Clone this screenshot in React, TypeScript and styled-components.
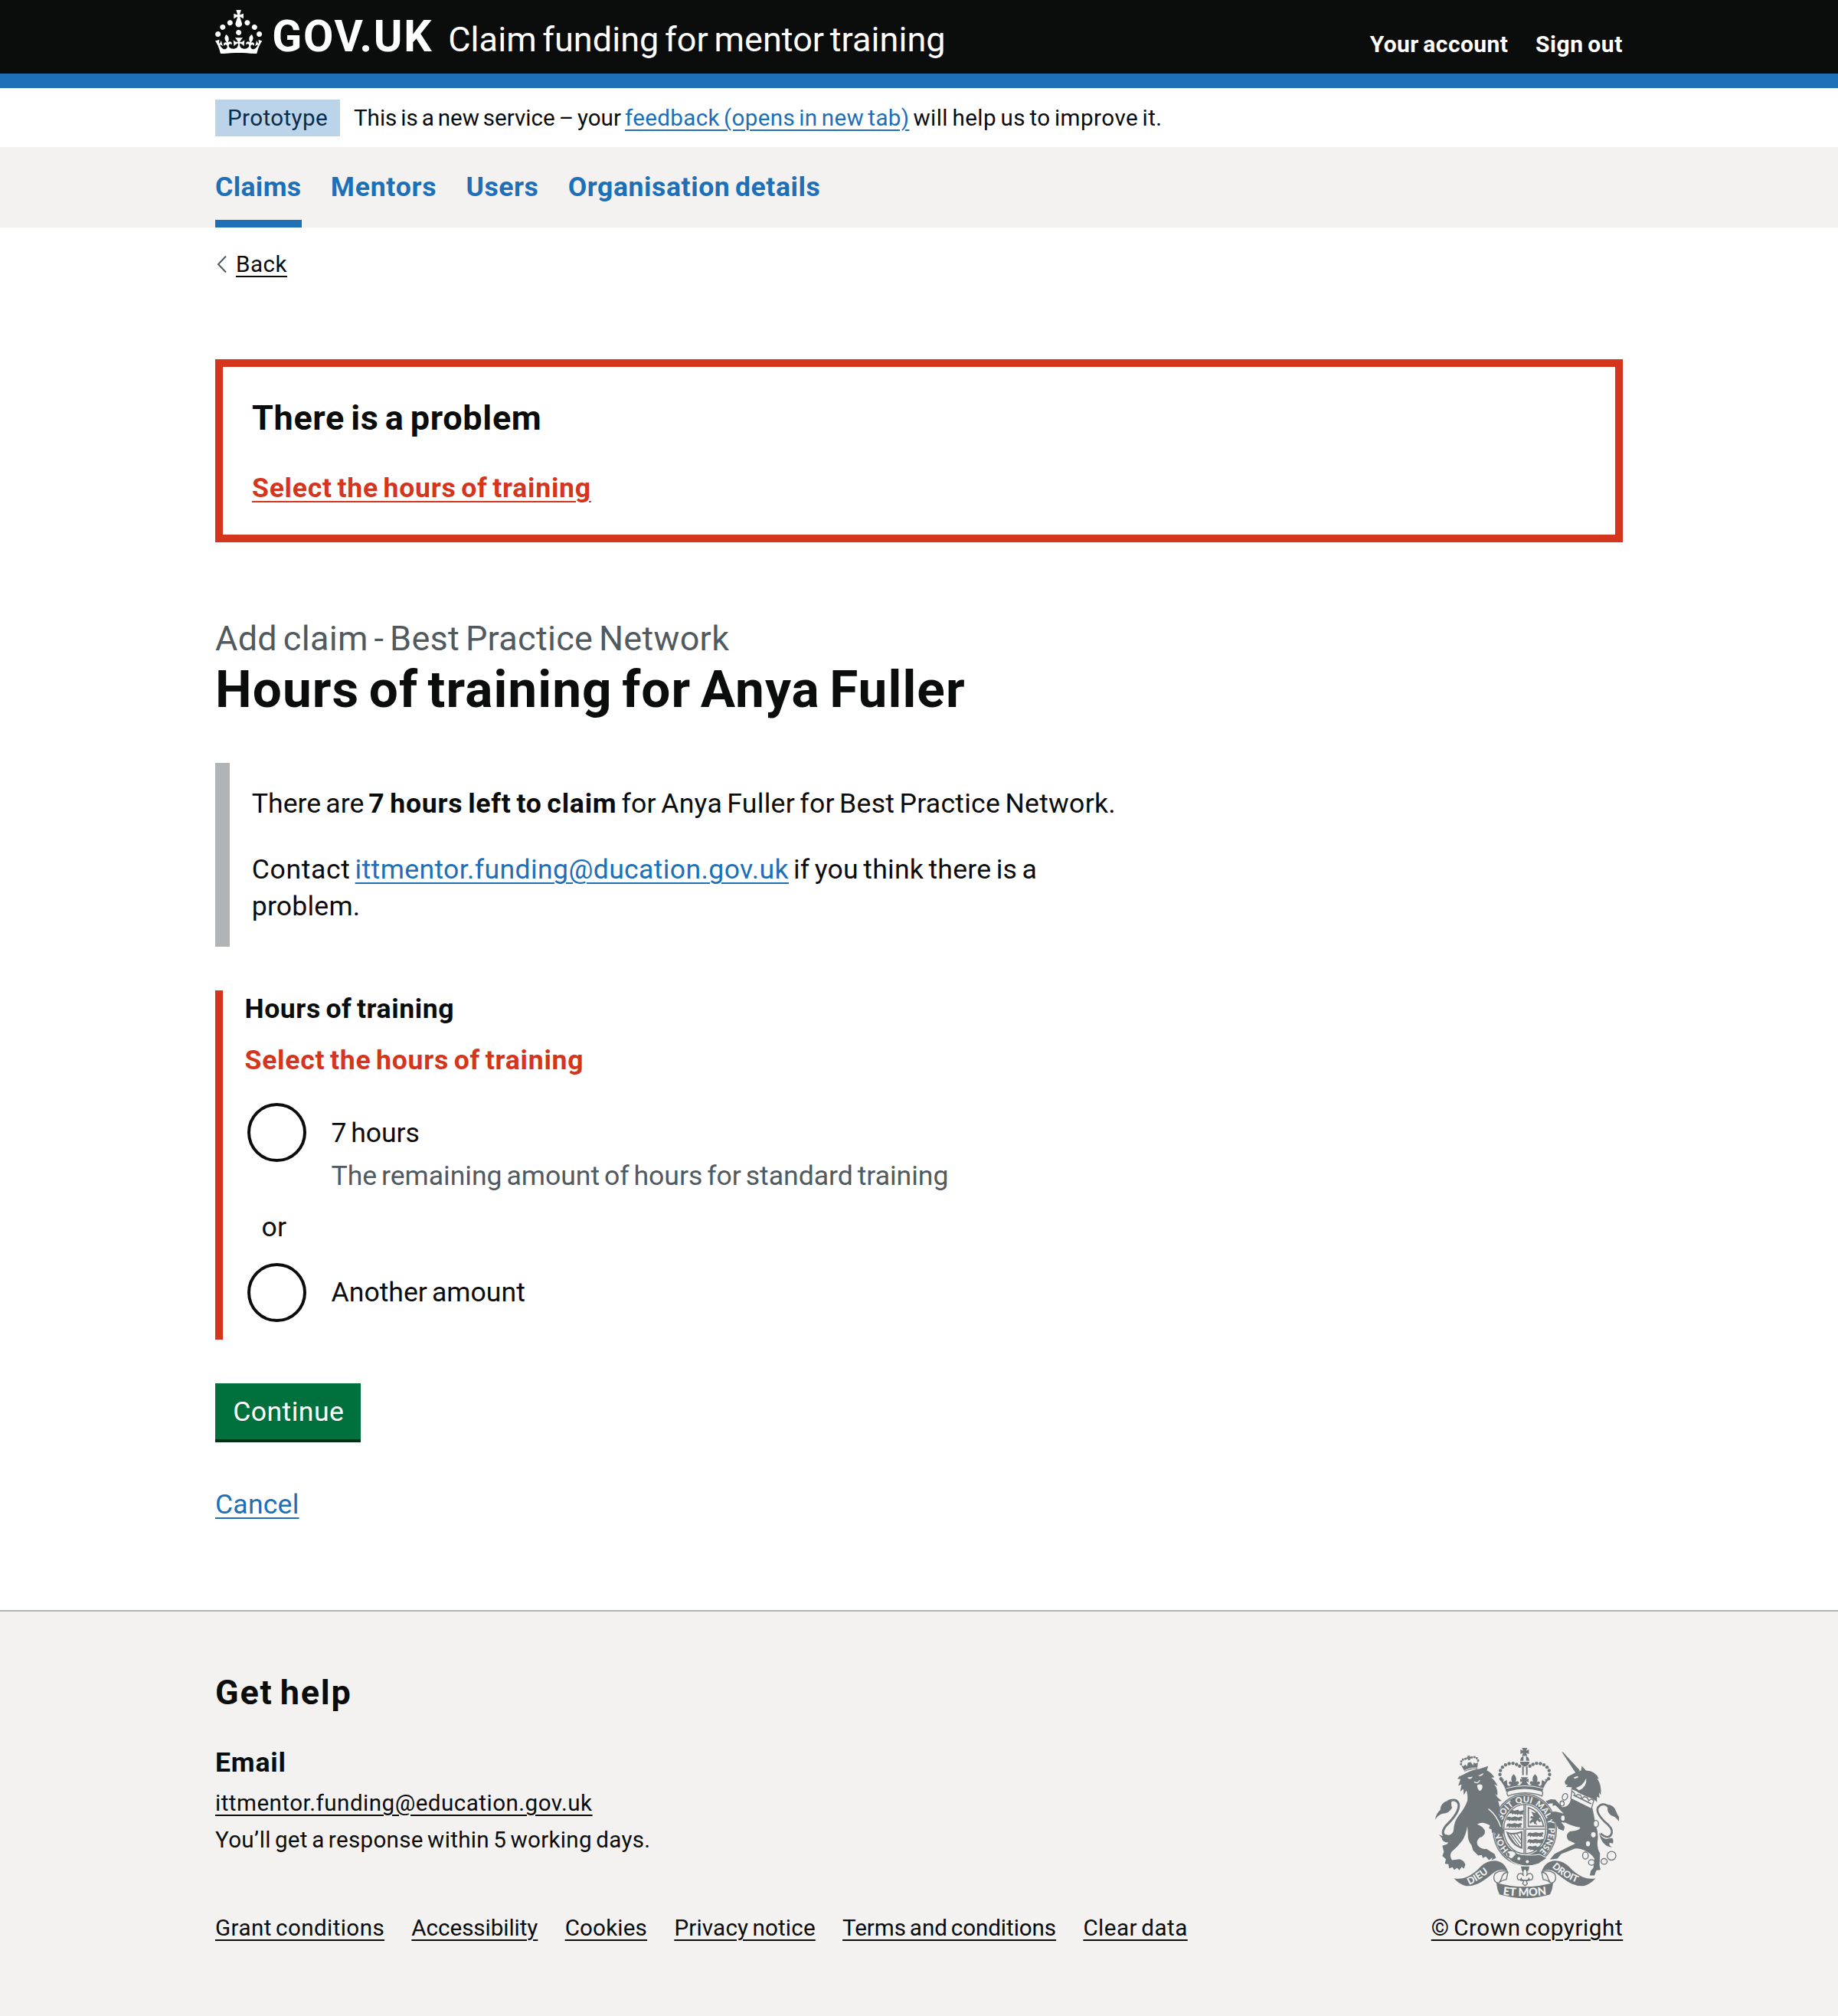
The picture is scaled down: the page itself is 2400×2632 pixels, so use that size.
import React from 'react';
import styled, { createGlobalStyle } from 'styled-components';

/* Design-system pixels are drawn at this zoom level. */
const ZOOM = 1.9146;
const u = (n: number) => `${(n * ZOOM).toFixed(2)}px`;

const color = {
  ink: '#0b0c0c',
  blue: '#1d70b8',
  grey: '#f3f2f1',
  secondary: '#505a5f',
  mid: '#b1b4b6',
  red: '#d4351c',
  green: '#00703c',
  crest: '#6f777b',
};

const GlobalStyle = createGlobalStyle`
  * { box-sizing: border-box; }
  body { margin: 0; background: #fff; color: ${color.ink}; font-family: Roboto, Arial, sans-serif; }
  h1, h2, h3, p, ul, fieldset, legend { margin: 0; padding: 0; border: 0; font-weight: 400; word-spacing: -0.08em; }
  ul { list-style: none; }
`;

const Page = styled.div`
  display: flex;
  flex-direction: column;
  min-height: 2632px;
`;

const Width = styled.div`
  width: ${u(960)};
  margin: 0 auto;
`;

type TextProps = { $ls?: number; $bold?: boolean };

const Text = styled.span<TextProps>`
  letter-spacing: ${(p) => p.$ls ?? 0}px;
  word-spacing: -0.08em;
  font-weight: ${(p) => (p.$bold ? 700 : 400)};
  white-space: nowrap;
`;

const Link = styled.a<TextProps & { $tone?: 'blue' | 'ink' | 'red' }>`
  color: ${(p) => color[p.$tone ?? 'blue']};
  letter-spacing: ${(p) => p.$ls ?? 0}px;
  word-spacing: -0.08em;
  font-weight: ${(p) => (p.$bold ? 700 : 400)};
  text-decoration: underline;
  text-decoration-thickness: 2px;
  text-underline-offset: 5px;
  white-space: nowrap;
`;

/* Header */
const Header = styled.header`
  background: ${color.ink};
  border-bottom: 19px solid ${color.blue};
`;
const HeaderRow = styled(Width)`
  display: flex;
  align-items: flex-start;
  height: 96px;
  color: #fff;
`;
const CrownIcon = styled.svg`
  display: block;
  flex: none;
  width: ${u(32)};
  height: ${u(30)};
  margin-top: 13px;
`;
const LogoText = styled.span`
  flex: none;
  width: 231px;
  padding: 19px 0 0 13px;
  font-size: 57.2px;
  line-height: 57px;
  font-weight: 700;
  letter-spacing: 1.73px;
`;
const ServiceName = styled.span`
  padding-top: 28px;
  padding-left: 12px;
  font-size: 45px;
  line-height: 48px;
  letter-spacing: 0.06px;
  word-spacing: -0.08em;
  white-space: nowrap;
`;
const AccountLinks = styled.nav`
  display: flex;
  gap: ${u(18.5)};
  margin-left: auto;
  padding-top: 38.5px;
  font-size: 30px;
  line-height: 38px;
`;

/* Phase banner */
const Banner = styled(Width)`
  display: flex;
  align-items: flex-start;
  height: 77px;
  padding-top: 15px;
  font-size: 29.6px;
  line-height: 48px;
`;
const Tag = styled.strong`
  width: 163px;
  height: 48px;
  margin-right: 18px;
  background: #bbd4ea;
  color: #0c2d4a;
  text-align: center;
  font-weight: 400;
  line-height: 48px;
  letter-spacing: 0.39px;
`;
const BannerText = styled.p`
  line-height: 48px;
`;

/* Primary navigation */
const NavBand = styled.nav`
  background: ${color.grey};
`;
const NavRow = styled(Width)`
  display: flex;
  gap: ${u(20)};
  height: 105px;
`;
const NavItem = styled.a<{ $current?: boolean; $ls: number }>`
  padding-top: 29px;
  border-bottom: 10px solid ${(p) => (p.$current ? color.blue : 'transparent')};
  color: ${color.blue};
  font-size: 35.6px;
  line-height: ${u(25)};
  font-weight: 700;
  letter-spacing: ${(p) => p.$ls}px;
  word-spacing: -0.08em;
  white-space: nowrap;
`;

/* Back link */
const BackRow = styled.div`
  display: flex;
  align-items: center;
  height: 38px;
  margin-top: 29px;
  font-size: 29.6px;
  line-height: 38px;
`;
const Chevron = styled.svg`
  width: 27px;
  height: 24px;
`;

/* Error summary */
const ErrorSummary = styled.section`
  height: 239.4px;
  margin-top: 104.8px;
  margin-bottom: 96.6px;
  padding: 38px;
  border: 10px solid ${color.red};
`;
const SummaryTitle = styled.h2`
  margin-bottom: ${u(20)};
  font-size: 45px;
  line-height: ${u(30)};
`;
const Body = styled.p`
  position: relative;
  top: 1px;
  font-size: 35.6px;
  line-height: ${u(25)};
`;

/* Page heading */
const Caption = styled.span`
  display: block;
  color: ${color.secondary};
  font-size: 45px;
  line-height: ${u(30)};
  letter-spacing: 0.29px;
  word-spacing: -0.08em;
`;
const Title = styled.h1`
  font-size: 67.5px;
  line-height: ${u(40)};
  font-weight: 700;
  letter-spacing: 1.07px;
`;
const Inset = styled.div`
  display: flex;
  flex-direction: column;
  gap: ${u(20)};
  width: 1225px;
  margin: ${u(30)} 0;
  padding: ${u(15)} 0 ${u(15)} ${u(15)};
  border-left: 19px solid ${color.mid};
`;

/* Form */
const FormGroup = styled.fieldset`
  min-width: 0;
  height: 455.5px;
  margin-bottom: 57px;
  padding-left: 28.5px;
  border-left: 10px solid ${color.red};
`;
const Legend = styled(Body)`
  margin-bottom: ${u(10)};
`;
const ErrorMessage = styled(Body)`
  margin-bottom: ${u(15)};
  color: ${color.red};
`;
const Option = styled.label`
  display: flex;
  align-items: center;
  height: ${u(44)};
  font-size: 35.6px;
  line-height: ${u(25)};
`;
const OptionLabel = styled(Text)`
  padding-top: 1.5px;
`;
const Circle = styled.span`
  width: 77px;
  height: 77px;
  margin: 0 32px 0 4px;
  border: 4px solid ${color.ink};
  border-radius: 50%;
`;
const Hint = styled(Body)`
  margin-top: -9.5px;
  padding-left: 113px;
  color: ${color.secondary};
`;
const Divider = styled(Body)`
  width: ${u(40)};
  margin: ${u(10)} 0;
  text-align: center;
`;
const Button = styled.button`
  display: block;
  width: 190.5px;
  height: 73px;
  margin: 0 0 61px;
  padding: 1px 0 0 1px;
  border: 0;
  background: ${color.green};
  box-shadow: 0 4px 0 #002d18;
  color: #fff;
  font: 35.6px / 72px Roboto, Arial, sans-serif;
  letter-spacing: 0.44px;
`;

/* Footer */
const Footer = styled.footer`
  flex: 1;
  margin-top: ${u(60)};
  padding-top: ${u(40)};
  border-top: 2px solid ${color.mid};
  background: ${color.grey};
`;
const FooterRow = styled(Width)`
  display: flex;
  justify-content: space-between;
  align-items: flex-end;
  font-size: 29.6px;
`;
const Contact = styled.div`
  margin: 6.2px 0 71.5px;
  line-height: ${u(25)};
`;
const FooterLinks = styled.ul`
  display: flex;
  gap: 35.3px;
  line-height: ${u(20)};
`;
const Licence = styled.div`
  display: flex;
  flex-direction: column;
  align-items: center;
  width: 250px;
  line-height: ${u(20)};
`;
const CrestSvg = styled.svg`
  display: block;
  width: 240px;
  height: 197px;
  margin-bottom: 19px;
  font-family: Lato, Roboto, sans-serif;
`;

const Crown = () => (
  <CrownIcon viewBox="0 0 32 30" fill="currentColor" aria-hidden="true">
    <path d="M22.6 10.4c-1 .4-2-.1-2.4-1-.4-.9.1-2 1-2.4.9-.4 2 .1 2.4 1s-.1 2-1 2.4m-5.9 6.7c-.9.4-2-.1-2.4-1-.4-.9.1-2 1-2.4.9-.4 2 .1 2.4 1s-.1 2-1 2.4m10.8-3.7c-1 .4-2-.1-2.4-1-.4-.9.1-2 1-2.4.9-.4 2 .1 2.4 1s0 2-1 2.4m3.3 4.8c-1 .4-2-.1-2.4-1-.4-.9.1-2 1-2.4.9-.4 2 .1 2.4 1s-.1 2-1 2.4M17 4.7l2.3 1.2V2.5l-2.3.7-.2-.2.9-3h-3.4l.9 3-.2.2c-.1.1-2.3-.7-2.3-.7v3.4L15 4.7c.1.1.1.2.2.2l-1.3 4c-.1.2-.1.4-.1.6 0 1.1.8 2 1.9 2.2h.7c1-.2 1.9-1.1 1.9-2.1 0-.2 0-.4-.1-.6l-1.3-4c-.1-.2 0-.2.1-.3m-7.6 5.7c.9.4 2-.1 2.4-1 .4-.9-.1-2-1-2.4-.9-.4-2 .1-2.4 1s0 2 1 2.4m-5 3c.9.4 2-.1 2.4-1 .4-.9-.1-2-1-2.4-.9-.4-2 .1-2.4 1s.1 2 1 2.4m-3.2 4.8c.9.4 2-.1 2.4-1 .4-.9-.1-2-1-2.4-.9-.4-2 .1-2.4 1s0 2 1 2.4m14.8 11c4.4 0 8.6.3 12.3.8 1.1-4.5 2.4-7 3.7-8.8l-2.5-.9c.2 1.3.3 1.9 0 2.7-.4-.4-.8-1.1-1.1-2.3l-1.2 4c.7-.5 1.3-.8 2-.9-1.1 2.5-2.6 3.1-3.5 3-1.1-.2-1.7-1.2-1.5-2.1.3-1.2 1.5-1.5 2.1-.1 1.1-2.3-.8-3-2-2.3 1.9-1.9 2.1-3.5.6-5.6-2.1 1.6-2.1 3.2-1.2 5.5-1.2-1.4-3.2-.6-2.5 1.6.9-1.4 2.1-.5 1.9.8-.2 1.1-1.7 2.1-3.5 1.9-2.7-.2-2.9-2.1-2.9-3.6.7-.1 1.9.5 2.9 1.9l.4-4.3c-1.1 1.1-2.1 1.4-3.2 1.4.4-1.2 2.1-3 2.1-3h-5.4s1.7 1.9 2.1 3c-1.1 0-2.1-.2-3.2-1.4l.4 4.3c1-1.4 2.2-2 2.9-1.9-.1 1.5-.2 3.4-2.9 3.6-1.9.2-3.4-.8-3.5-1.9-.2-1.3 1-2.2 1.9-.8.7-2.3-1.2-3-2.5-1.6.9-2.2.9-3.9-1.2-5.5-1.5 2-1.3 3.7.6 5.6-1.2-.7-3.1 0-2 2.3.6-1.4 1.8-1.1 2.1.1.2.9-.3 1.9-1.5 2.1-.9.2-2.4-.5-3.5-3 .6 0 1.2.3 2 .9l-1.2-4c-.3 1.1-.7 1.9-1.1 2.3-.3-.8-.2-1.4 0-2.7l-2.9.9C1.3 23 2.6 25.5 3.7 30c3.7-.5 7.9-.8 12.3-.8" />
  </CrownIcon>
);

/* Arc on the garter ellipse between two angles, clockwise in degrees. */
const garterArc = (from: number, to: number) => {
  const point = (a: number) => {
    const r = (a * Math.PI) / 180;
    return `${(422 + 93 * Math.cos(r)).toFixed(1)} ${(385 + 106 * Math.sin(r)).toFixed(1)}`;
  };
  return `M${point(from)}A93 106 0 0 1 ${point(to)}`;
};

const motto: [string, number, number][] = [
  ['HON', 132, 182],
  ['SOIT', 200, 266],
  ['QUI', 249, 310],
  ['MAL', 295, 352],
  ['Y', 338, 360],
  ['PENSE', -4, 84],
];

const archDots: [number, number][] = [
  [329, 186], [325, 170], [327, 154], [335, 141], [347, 132], [361, 127], [376, 126], [390, 130], [402, 137],
];

const lionRow = 'c6-6 12-3 18-1l14-4 4 6-6 4 4 8-6-2-6 2-8-3-4 5-4-7-8 3z';

const Ribbon = () => (
  <>
    <path d="M145 575Q172 580 196 570Q226 556 250 529Q272 507 304 506Q342 508 356 548Q326 534 302 552Q262 586 238 597Q218 606 192 605Q166 598 145 575Z" />
    <path d="M356 550Q328 540 306 556Q297 572 305 586Q312 596 322 592Q332 582 350 580L356 552Q340 552 334 566Q332 578 322 592" fill="none" stroke={color.crest} strokeWidth="4" />
  </>
);

const Crest = () => (
  <CrestSvg viewBox="72 66 718 589" fill={color.crest} aria-hidden="true">
    {/* royal crown */}
    <path d="M411 66h21l-5 11 11-5v18l-11-5 5 12h-21l5-12-11 5V72l11 5z" />
    <path d="M404 116q2-16 13-18v18zM427 98q11 2 13 18h-13zM404 120h36q0 12-14 18h-8q-14-6-14-18zM412 138h6v34h-6zM427 138h6v34h-6z" />
    {archDots.map(([x, y]) => (
      <React.Fragment key={x + y}>
        <circle cx={x} cy={y} r="6.6" />
        <circle cx={844 - x} cy={y} r="6.6" />
      </React.Fragment>
    ))}
    <path d="M326 190l14-3-2 12 14-8 2 20q8 8 14-3-10 2-8-9 6-5 12 0-8-18 7-31 15 14 7 31 8-6 13 1 2 8-7 8 10 9 18-6l2-6-8 4v-14l8 4-6-10h29l-7 10 9-4v14l-9-4 3 6q8 15 18 6-9 0-7-8 5-7 13-1-8-17 7-31 15 13 7 31 6-5 12 0 2 11-8 9 6 11 14 3l2-20 14 8-2-12 14 3q-20 24-24 47-73-20-142 0-4-23-25-47z" />
    <path d="M350 224q72-20 144 0" fill="none" stroke={color.grey} strokeWidth="3" />
    <path d="M357 254q-12-18 6-22 59-16 118 0 18 4 8 22-18-11-66-13-46 2-66 13z" fill={color.grey} stroke={color.crest} strokeWidth="4" />

    {/* garter and shield */}
    <ellipse cx="422" cy="385" rx="126" ry="141" />
    <ellipse cx="422" cy="385" rx="121" ry="136" fill="none" stroke={color.grey} strokeWidth="2" />
    <ellipse cx="422" cy="383" rx="87" ry="101" fill={color.grey} />
    <ellipse cx="422" cy="383" rx="82" ry="96" fill="none" stroke={color.crest} strokeWidth="4" />
    <path d="M417 286h10v195h-10zM337 379h170v7H337z" />
    <path d="M422 288v192M339 382.500h166" stroke={color.grey} strokeWidth="2" />
    <g>
      <path d={`M364 312${lionRow}M352 338${lionRow}M352 364${lionRow}`} />
      <path d={`M384 314${lionRow}M378 338${lionRow}M376 364${lionRow}`} />
      <path d={`M434 400${lionRow}M434 426${lionRow}M434 452${lionRow}`} />
      <path d={`M460 400${lionRow}M460 426${lionRow}M450 454${lionRow}`} />
    </g>
    <path d="M436 299q46 14 60 73h-60z" fill="none" stroke={color.crest} strokeWidth="5" />
    <path d="M447 314l14 6 10-6 6 14 8 6-8 6 10 12-8 4-8-8-6 8 6 10-12-4-4-8-12 8-2-8 12-12-10-2 4-8 10 2z" />
    <path d="M354 397q18 9 56-3v62q-40-12-56-59z" fill="none" stroke={color.crest} strokeWidth="6" />
    <path d="M366 402l34 46M378 402l28 38M390 400l18 26M360 406l28 40" stroke={color.crest} strokeWidth="3.5" />

    {motto.map(([word, from, to]) => (
      <React.Fragment key={word}>
        <path id={`garter-${word}`} d={garterArc(from, to)} fill="none" />
        <text fontSize="33" fontWeight="900" fill={color.grey}>
          <textPath href={`#garter-${word}`}>{word}</textPath>
        </text>
      </React.Fragment>
    ))}

    {/* buckle */}
    <path d="M350 478q10-14 26-8 14 8 30 12 40 6 74 0l30 14-34 22q-50 18-92-2-26-8-34-38z" stroke={color.grey} strokeWidth="3" />
    <path d="M352 470q20-8 34 4 4 12-4 14-4 10-14 12-6-8-16-6 12-8 8-14-8-2-8-10z" fill={color.grey} stroke={color.crest} strokeWidth="4" />
    <circle cx="399" cy="498" r="6" fill={color.grey} />
    <circle cx="432" cy="510" r="6" fill={color.grey} />

    {/* pendant fleur-de-lis */}
    <path d="M407 529h33l-4 18h-25z" />
    <path d="M423 536q14 16 5 30 8-14 20-8 10 10 2 22-8 4-12-4-2 8-10 8l4 12-9 8-9-8 4-12q-8 0-10-8-4 8-12 4-8-12 2-22 12-6 20 8-9-14 4-30z" fill={color.grey} stroke={color.crest} strokeWidth="4" />
    <path d="M404 583h38" stroke={color.crest} strokeWidth="5" />

    {/* lion */}
    <path d="M166 178l22-11q26-16 58-20l33-10-5 17q18 8 29 27l-12 1q16 12 25 32l-13-6q15 18 12 44l-9-7q10 18 26 28l-14 1 8 28-8 20q8 14 14 30l8 46-12 12-8-10-10 6-6-12-10 4-2-14-10-4 4-12-14-6q-20-8-36 2 22 8 30 24 4 20-20 28-16 14-8 30 14 18 34 14l32 20 6 16-18 8 4-10-14 10-12-14-12 6-4-12-14 2-20-20-6-20q-16-20-14-42l-2-32q-6 34-20 56-20 26-42 44-10 14 2 32l30-4q18 6 22 22l-6 16-8-8-10 14-8-10-12 8-6-10-14 4-2-16-14-2 4-18-14-12 6-16-6-24 18-6q22-24 26-56 2-34 20-56 24-30 34-58 2-24-4-40l-10 18-2-24-12 10 5-28-13 6 9-26-12-2 13-18z" />
    <path d="M197 182q12 12 22-4zM240 174q14 6 22-10zM236 212q10-8 20 0 4 16-10 22-10-8-10-22z" fill={color.grey} />
    <path d="M224 198q14 10 22-6" fill="none" stroke={color.grey} strokeWidth="4" />
    <path d="M280 304q34 26 48 70" fill="none" stroke={color.grey} strokeWidth="4" />
    <path d="M152 388q-16 30-40 22-20-10 2-40 54-52 50-84-8-26-42-12" fill="none" stroke={color.crest} strokeWidth="9" />
    <path d="M72 346q4-26 20-38 2-36 46-38-6 14 0 30-12 22-36 22-18 4-30 24zM86 404q16 10 30 0 20 10 34-18l4 18q-6 22-26 22l4 9q-34 2-34-18z" />
    <g transform="rotate(-12 208 130)">
      <path d="M203 96h12l-3 6 6-2v9l-6-2 2 6h-10l2-6-6 2v-9l6 2zM174 128l9 4 7-6 5 10 6-14h12l6 14 5-10 7 6 9-4-8 26q-25-8-50 0z" />
      <path d="M182 149q25-8 50 0" fill="none" stroke={color.grey} strokeWidth="2.500" />
      {[[174, 122], [177, 112], [185, 106], [195, 105], [221, 105], [231, 106], [239, 112], [242, 122]].map(([x, y]) => (
        <circle key={x} cx={x} cy={y} r="4.4" />
      ))}
    </g>

    {/* unicorn */}
    <path d="M566 81l6 2 65 70-14 14z" />
    <path d="M578 198l12-20 30-16 22-8 3-18 16 18q36 0 50 32l-6 0q18 22 14 64l-7-10 2 22-10-6 0 22q-10-12-28-18-34-12-54-26l-14-6-6 6 4-14-24-2 8-8-10-2z" />
    <path d="M662 184q4 34-28 48l-12-10q28-8 40-38z" fill={color.grey} />
    <path d="M612 182l16-6 4 4-14 6z" fill={color.grey} />
    <path d="M602 258l84 42q6 26 12 64 14 34 8 68-2 26 10 46l-2 46 4 18-16 2-8 20-18 0 4-18 10-12 4-36q-14-22-44-34-24-10-40-2l-46 18-14 18-30 4 18-22 68-34q14-6 12-8l-26-12q-14-20 6-34 44-4 40-16-30-4-56-18l-18-2 14 18-4 16-20-8-14-26-18-18 2-22 16-2 34 8-32-32-12 2 2-10-20 2-8-10 20-8 18 2 26 30q28-2 34-30z" />
    <path d="M606 234l10 8 4 14 8-8 12 2 6 14 8-8 12 4 6 12 8-6 12 4-10 34-80-40z" fill={color.grey} stroke={color.crest} strokeWidth="4" />
    <path d="M612 250l70 34" stroke={color.crest} strokeWidth="5" />
    <path d="M718 400q34 28 44-2 4-20-28-44-36-36-26-56 16-20 38-6" fill="none" stroke={color.crest} strokeWidth="8" />
    <path d="M736 288q34-4 44 28 4 12 12 22-4 4 0 18-14-22-32-26-18-14-14-30zM712 396q8 22 30 26 10-4 22-4 6 6 2 22-12-6-14 0 0 8 12 14-42-2-52-58z" />
    <g fill={color.grey} stroke={color.crest} strokeWidth="4">
      <ellipse cx="579" cy="257" rx="10" ry="13" transform="rotate(25 579 257)" />
      <ellipse cx="568" cy="283" rx="8" ry="10" />
      <ellipse cx="571" cy="340" rx="9" ry="12" />
      <ellipse cx="700" cy="362" rx="10" ry="13" />
      <ellipse cx="690" cy="405" rx="11" ry="12" />
      <ellipse cx="669" cy="440" rx="10" ry="12" />
      <ellipse cx="659" cy="486" rx="11" ry="14" />
      <ellipse cx="683" cy="513" rx="12" ry="11" />
      <ellipse cx="732" cy="509" rx="12" ry="11" />
      <circle cx="761" cy="487" r="17" />
    </g>

    {/* motto ribbons */}
    <Ribbon />
    <g transform="translate(844 0) scale(-1 1)">
      <Ribbon />
    </g>
    <path d="M311 592q111 32 222 0-2 26-12 46-98 30-198 0-10-20-12-46z" />
    <path id="ribbon-left" d="M205 601Q252 580 306 530" fill="none" />
    <path id="ribbon-centre" d="M336 639Q422 652 520 637" fill="none" />
    <path id="ribbon-right" d="M528 531Q576 580 665 606" fill="none" />
    <g fill={color.grey} fontWeight="900">
      <text fontSize="38"><textPath href="#ribbon-left">DIEU</textPath></text>
      <text fontSize="44"><textPath href="#ribbon-centre" textLength="172">ET MON</textPath></text>
      <text fontSize="37"><textPath href="#ribbon-right">DROIT</textPath></text>
    </g>
  </CrestSvg>
);

const footerLinks: [string, number][] = [
  ['Grant conditions', 0.4],
  ['Accessibility', -0.05],
  ['Cookies', 0.18],
  ['Privacy notice', 0.18],
  ['Terms and conditions', -0.06],
  ['Clear data', 0.45],
];

export default function App() {
  return (
    <Page>
      <GlobalStyle />
      <Header>
        <HeaderRow>
          <Crown />
          <LogoText>GOV.UK</LogoText>
          <ServiceName>Claim funding for mentor training</ServiceName>
          <AccountLinks>
            <Text $bold $ls={0.45}>Your account</Text>
            <Text $bold $ls={0.6}>Sign out</Text>
          </AccountLinks>
        </HeaderRow>
      </Header>

      <Banner>
        <Tag>Prototype</Tag>
        <BannerText>
          <Text $ls={-0.02}>This is a new service – your</Text>{' '}
          <Link $ls={0.33}>feedback (opens in new tab)</Link>{' '}
          <Text $ls={0.45}>will help us to improve it.</Text>
        </BannerText>
      </Banner>

      <NavBand>
        <NavRow>
          <NavItem $current $ls={0.38}>Claims</NavItem>
          <NavItem $ls={0.75}>Mentors</NavItem>
          <NavItem $ls={0.5}>Users</NavItem>
          <NavItem $ls={0.58}>Organisation details</NavItem>
        </NavRow>
      </NavBand>

      <Width>
        <BackRow>
          <Chevron viewBox="0 0 27 24" fill="none" stroke={color.secondary} strokeWidth="2">
            <path d="M14 1.500L4 12 14 22.500" />
          </Chevron>
          <Link $tone="ink" $ls={0.5}>Back</Link>
        </BackRow>

        <ErrorSummary>
          <SummaryTitle><Text $bold $ls={0.66}>There is a problem</Text></SummaryTitle>
          <Body><Link $tone="red" $bold $ls={0.74}>Select the hours of training</Link></Body>
        </ErrorSummary>

        <Caption>Add claim - Best Practice Network</Caption>
        <Title>Hours of training for Anya Fuller</Title>

        <Inset>
          <Body>
            <Text $ls={0.05}>There are</Text>{' '}
            <Text $bold $ls={0.77}>7 hours left to claim</Text>{' '}
            <Text $ls={0.27}>for Anya Fuller for Best Practice Network.</Text>
          </Body>
          <Body>
            <Text $ls={0.65}>Contact</Text> <Link $ls={0.37}>ittmentor.funding@ducation.gov.uk</Link>{' '}
            <Text $ls={0.27}>if you think there is a</Text>
            <br />
            <Text $ls={0.2}>problem.</Text>
          </Body>
        </Inset>

        <FormGroup>
          <Legend><Text $bold $ls={0.58}>Hours of training</Text></Legend>
          <ErrorMessage><Text $bold $ls={0.74}>Select the hours of training</Text></ErrorMessage>
          <Option><Circle /><OptionLabel $ls={-0.1}>7 hours</OptionLabel></Option>
          <Hint><Text $ls={-0.03}>The remaining amount of hours for standard training</Text></Hint>
          <Divider>or</Divider>
          <Option><Circle /><OptionLabel $ls={0.02}>Another amount</OptionLabel></Option>
        </FormGroup>

        <Button>Continue</Button>
        <Body><Link $ls={0.2}>Cancel</Link></Body>
      </Width>

      <Footer>
        <FooterRow>
          <div>
            <SummaryTitle><Text $bold $ls={1.75}>Get help</Text></SummaryTitle>
            <Body as="h3"><Text $bold $ls={0.8}>Email</Text></Body>
            <Contact>
              <Link $tone="ink" $ls={0.47}>ittmentor.funding@education.gov.uk</Link>
              <br />
              <Text $ls={0.31}>You’ll get a response within 5 working days.</Text>
            </Contact>
            <FooterLinks>
              {footerLinks.map(([label, ls]) => (
                <li key={label}><Link $tone="ink" $ls={ls}>{label}</Link></li>
              ))}
            </FooterLinks>
          </div>
          <Licence>
            <Crest />
            <Link $tone="ink" $ls={0.6}>© Crown copyright</Link>
          </Licence>
        </FooterRow>
      </Footer>
    </Page>
  );
}
